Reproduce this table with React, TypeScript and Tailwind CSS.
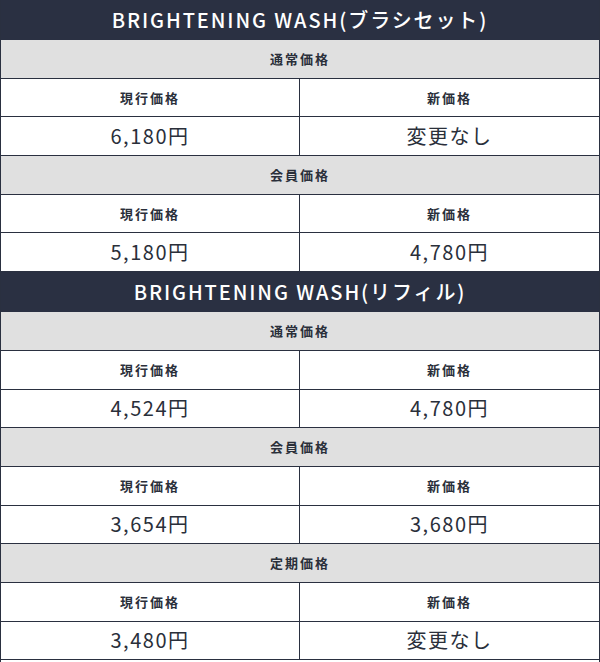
import React from "react";

type Row = { label: string; current: string; next: string };
type Section = { title: string; rows: Row[] };

const sections: Section[] = [
  {
    title: "BRIGHTENING WASH(ブラシセット)",
    rows: [
      { label: "通常価格", current: "6,180円", next: "変更なし" },
      { label: "会員価格", current: "5,180円", next: "4,780円" },
    ],
  },
  {
    title: "BRIGHTENING WASH(リフィル)",
    rows: [
      { label: "通常価格", current: "4,524円", next: "4,780円" },
      { label: "会員価格", current: "3,654円", next: "3,680円" },
      { label: "定期価格", current: "3,480円", next: "変更なし" },
    ],
  },
];

function Block({ row }: { row: Row }) {
  return (
    <>
      <div className="h-[38.7px] flex items-center justify-center bg-[#e0e0e0] border-b border-[#2a3040] text-[13px] font-bold tracking-[2px] text-[#2a2f3a]">
        {row.label}
      </div>
      <div className="grid grid-cols-2 h-[38.7px] border-b border-[#2a3040]">
        <div className="flex items-center justify-center border-r border-[#2a3040] text-[13px] font-bold tracking-[2px] text-[#2a2f3a]">
          現行価格
        </div>
        <div className="flex items-center justify-center text-[13px] font-bold tracking-[2px] text-[#2a2f3a]">
          新価格
        </div>
      </div>
      <div className="grid grid-cols-2 h-[38.7px] border-b border-[#2a3040]">
        <div className="flex items-center justify-center border-r border-[#2a3040] text-[20px] tracking-[1.5px] text-[#2a2f3a]">
          {row.current}
        </div>
        <div className="flex items-center justify-center text-[20px] tracking-[1.5px] text-[#2a2f3a]">
          {row.next}
        </div>
      </div>
    </>
  );
}

export default function App() {
  return (
    <div
      className="w-[600px] h-[662px] overflow-hidden bg-white border-x border-[#2a3040]"
      style={{ fontFamily: '"Noto Sans CJK JP", "Noto Sans", sans-serif' }}
    >
      {sections.map((s) => (
        <div key={s.title}>
          <div className="h-[40px] bg-[#2a3042] flex items-center justify-center text-white text-[20px] font-medium tracking-[1.9px]">
            {s.title}
          </div>
          {s.rows.map((r) => (
            <Block key={r.label} row={r} />
          ))}
        </div>
      ))}
    </div>
  );
}
